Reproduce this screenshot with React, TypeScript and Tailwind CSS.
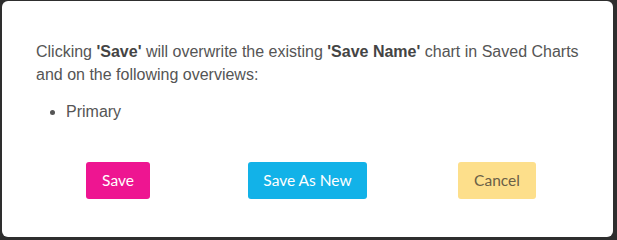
export default function App() {
  return (
    <div className="w-[617px] h-[240px] bg-[#2e2e2e] pl-[2px] pt-[1px] pr-[4px] pb-[3px]">
      <div className="h-full bg-white rounded-[6px] pt-[39px] px-[34px] font-['Liberation_Sans',Arial,sans-serif] text-[#555] text-[16px]">
        <p className="leading-[23px]">
          Clicking <b className="text-[#444]">'Save'</b> will overwrite the existing <b className="text-[#444]">'Save Name'</b> chart in Saved Charts
          <br />
          and on the following overviews:
        </p>
        <ul className="list-disc pl-[30px] mt-[14px] leading-[23px]">
          <li>Primary</li>
        </ul>
        <div className="flex mt-[39px] font-['Lato',sans-serif] text-[15.5px]">
          <button className="ml-[50px] w-[64px] h-[37px] rounded-[3px] bg-[#ee1591] text-white">Save</button>
          <button className="ml-[98px] w-[119px] h-[37px] rounded-[3px] bg-[#12b2e8] text-white">Save As New</button>
          <button className="ml-[91px] w-[78px] h-[37px] rounded-[3px] bg-[#fddf8b] text-[#6b6047]">Cancel</button>
        </div>
      </div>
    </div>
  );
}
